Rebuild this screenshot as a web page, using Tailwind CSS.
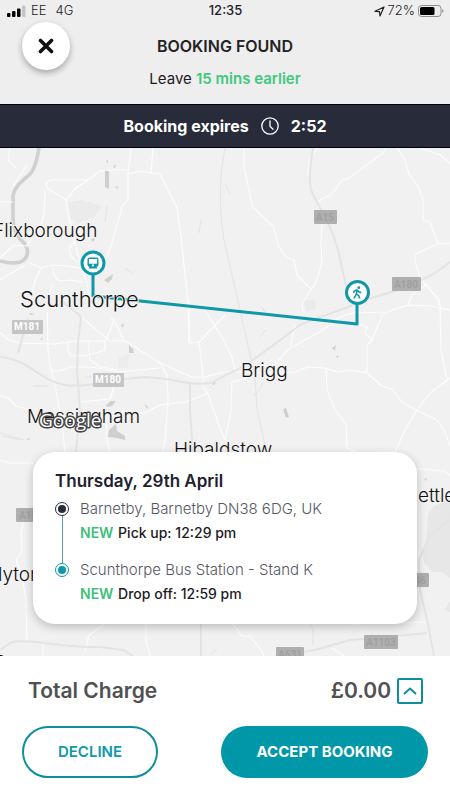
<!DOCTYPE html>
<html lang="en">
<head>
    <meta charset="UTF-8">
    <meta name="viewport" content="width=device-width, initial-scale=1.0">
    <title>Booking Found</title>
    <script src="https://cdn.jsdelivr.net/npm/@tailwindcss/browser@4"></script>
</head>
<body class="flex flex-col min-h-screen bg-white font-['Inter',sans-serif] text-[#1c1c1e]">
    <header class="bg-[#eeeeee] pb-4">
        <!-- phone status bar -->
        <div class="grid grid-cols-3 items-center h-[22px] pl-[7px] pr-[6px] text-[13px] text-[#1c1c1e]">
            <div class="flex items-center gap-[5px] font-light">
                <svg class="w-[19px] h-3" viewBox="0 0 19 12" aria-hidden="true">
                    <rect x="0" y="8" width="3.5" height="4" rx="1" fill="#000"/>
                    <rect x="5" y="6" width="3.5" height="6" rx="1" fill="#000"/>
                    <rect x="10" y="3.5" width="3.5" height="8.5" rx="1" fill="#000"/>
                    <rect x="15" y="0.5" width="3.5" height="11.5" rx="1" fill="#c4c4c4"/>
                </svg>
                <span>EE</span>
                <span class="pl-1">4G</span>
            </div>
            <div class="text-center font-medium">12:35</div>
            <div class="flex items-center justify-end gap-[3px] font-light">
                <svg class="w-[11px] h-[11px]" viewBox="0 0 11 11" aria-hidden="true">
                    <path d="M1 5.3L10 1L6 10L5.5 5.6Z" fill="none" stroke="#222" stroke-width="1.2" stroke-linejoin="round"/>
                </svg>
                <span>72%</span>
                <svg class="w-[26px] h-3" viewBox="0 0 26 12" aria-hidden="true">
                    <rect x="0.5" y="0.5" width="22.5" height="11" rx="3" fill="none" stroke="#8e8e8e"/>
                    <rect x="2" y="2" width="14.5" height="8" rx="1.5" fill="#000"/>
                    <path d="M24.3 4.2a2 2 0 0 1 0 3.6z" fill="#777"/>
                </svg>
            </div>
        </div>
        <div class="grid grid-cols-[48px_1fr_48px] items-center px-[22px]">
            <button type="button" aria-label="Close" class="flex items-center justify-center w-12 h-12 rounded-full bg-white shadow-[0_3px_6px_rgba(0,0,0,0.3)]">
                <svg class="w-4 h-4" viewBox="0 0 16 16" aria-hidden="true">
                    <path d="M2.5 2.5L13.5 13.5M13.5 2.5L2.5 13.5" stroke="#111" stroke-width="3.6" stroke-linecap="round"/>
                </svg>
            </button>
            <h1 class="text-center text-base font-semibold text-[#222]">BOOKING FOUND</h1>
        </div>
        <p class="text-center text-[15px] leading-[18px]">Leave <span class="font-semibold text-[#41c87f]">15 mins earlier</span></p>
    </header>

    <div class="flex items-center justify-center h-11 gap-3 bg-[#272b3a] border-y border-black text-base font-bold text-white">
        <span>Booking expires</span>
        <svg class="w-[18px] h-[18px]" viewBox="0 0 18 18" fill="none" stroke="#fff" stroke-width="1.3" aria-hidden="true">
            <circle cx="9" cy="9" r="8.2"/>
            <path d="M9 3.8V9.3L12 12.2" stroke-linecap="round"/>
        </svg>
        <span>2:52</span>
    </div>

    <main class="relative flex flex-col flex-1 justify-end px-[33px] pb-8 bg-[#f1f1f1] overflow-hidden">
        <svg class="absolute inset-0 w-full h-full" viewBox="0 148 450 508" preserveAspectRatio="xMidYMid slice" role="img" aria-label="Route from Barnetby to Scunthorpe">
            <!-- lakes and built up areas -->
            <g fill="#cfcfcf">
                <path d="M105 169L109 172L109 189L105 187Z"/>
                <path d="M129 345L133 349L134 353L129 353Z"/>
                <path d="M106 405L111 401L116 401L112 406L107 407Z"/>
                <path d="M283 409L286 408L289 417L286 418Z"/>
                <path d="M109 430L116 424L117 431L125 436L125 440L117 438L108 437Z"/>
                <path d="M144 404L148 407L147 409Z"/>
                <path d="M104 280L113 274L112 279L108 283Z"/>
                <path d="M332 348L336 345L335 351Z"/>
                <path d="M336 357L338 355L338 358Z"/>
                <path d="M91 239L95 238L93 242Z"/>
                <path d="M122 359L125 362L122 362Z"/>
                <path d="M106 161L108 160L108 163Z"/>
                <path d="M113 167L116 164L115 168Z"/>
                <path d="M115 186L118 187L117 189Z"/>
                <path d="M30 313L35 314L30 315Z"/>
                <path d="M121 326L124 323L123 327Z"/>
                <path d="M40 340L43 337L42 340Z"/>
                <path d="M212 384L216 382L214 385Z"/>
                <path d="M424 479L427 478L426 481Z"/>
                <path d="M27 440L30 437L29 440Z"/>
            </g>
            <path d="M450 500L434 506L428 515L426 545L422 550L424 563L433 572L442 572L450 578ZM445 610L450 601V612Z" fill="#e7e7e7"/>
            <path d="M68 202L82 200L102 206L94 217L78 223L70 217Z" fill="#ebebeb"/>
            <path d="M118 357L129 354L128 368L118 368Z" fill="#ededed"/>
            <path d="M303 301L315 299L316 309L306 312Z" fill="#ebebeb"/>
            <!-- river -->
            <path d="M39 148C37 160 34 171 29 175C22 181 13 188 13 198V218C13 229 18 238 24 243C30 250 28 259 20 262C14 264 7 263 0 261" fill="none" stroke="#d0d0d0" stroke-width="3.6"/>
            <!-- railways -->
            <g fill="none" stroke="#dfdfdf" stroke-width="0.8">
                <path d="M225 148C220 174 218 205 224 240L238 301L255 377L257 409L266 450"/>
                <path d="M225 184L230 194M201 220L199 233M107 206L105 222M125 268L132 273M98 255L103 250"/>
                <path d="M254 396C258 391 262 389 262 383M260 337L266 330M262 307L266 314"/>
                <path d="M0 433L24 440M2 436L20 440M309 622L313 630V646M211 654L217 649"/>
                <path d="M33 386H49M85 377H92"/>
            </g>
            <!-- minor roads -->
            <g fill="none" stroke="#fcfcfc" stroke-width="1.2" stroke-linejoin="round">
                <path d="M10 148L8 160L16 168M27 165L13 186M0 202H13"/>
                <path d="M131 148L128 174V200L122 206L120 215L116 228L111 246L105 260L98 270"/>
                <path d="M153 148L151 173L160 174L171 196L177 208L181 237L188 302L189 340L190 343"/>
                <path d="M151 173L140 171L128 174M128 170H108L100 171L88 180L76 188L66 200L47 188L46 183L50 180H88"/>
                <path d="M66 200L69 217L74 240L80 262L87 283L90 300"/>
                <path d="M45 190L44 215L40 227L26 246M0 258L14 245L28 246M28 262L41 268L52 265L68 266L80 268"/>
                <path d="M0 280L25 265M41 268L36 278L31 295M52 265L54 275L59 281L72 280L83 282M74 243L69 248L71 256L77 262M48 300L52 285"/>
                <path d="M0 333L9 340L20 343L55 344L75 341L106 341L113 323"/>
                <path d="M47 300L48 350L50 365L56 390L63 430L65 455M51 371H60L70 367L90 367L120 372L159 368"/>
                <path d="M81 317L110 341L125 341L160 363L192 377H205L225 372M111 317L118 328L124 341"/>
                <path d="M68 341V350L71 356L88 355L105 350V341M88 341L90 360L100 367L118 370"/>
                <path d="M160 363L167 375L168 400L165 440L163 452M80 402L110 399L114 387M107 411L106 435L110 452"/>
                <path d="M106 413H145L160 405L185 402L207 394M0 395L8 398L16 406L30 410"/>
                <path d="M189 300V342L192 343L199 342L225 315M204 309L225 342M199 342L203 375V387L208 394L220 428L225 440"/>
                <path d="M244 148L244 168L248 185L252 206L264 218L273 226L279 247L286 257L294 260L297 275L311 289"/>
                <path d="M318 148L309 160L308 175M386 148L383 153L346 180L343 179L331 195L316 202"/>
                <path d="M322 223L321 242L322 263L315 285L311 289L302 304L303 312"/>
                <path d="M397 148L405 160L409 174L418 186L423 200L423 220L430 222L438 244L415 254L415 262L421 279L432 292L439 300V306M438 244L450 243"/>
                <path d="M420 148L440 155L450 163M427 284L412 295L408 305L405 306"/>
                <path d="M274 365L290 348L320 332L340 317L352 313L387 312L408 305L430 306L450 310M290 348L295 325"/>
                <path d="M359 324L367 327L365 333L372 340L383 313M372 340L367 345V370L364 373"/>
                <path d="M225 372L240 372L275 373L295 372L308 367L325 368L337 372L350 370L367 373L382 386L392 389L403 403L416 410L437 420L445 432L450 446"/>
                <path d="M326 370L327 390L335 410L346 424L347 448L356 452"/>
                <path d="M395 452L405 430L417 410L430 393L450 378M440 303L441 350L447 380M225 343L231 355L236 372M248 378L232 382L231 410L225 440"/>
                <path d="M0 460L10 463H34M23 523L21 535L22 552L16 560L22 576L26 600L27 641"/>
                <path d="M43 641V656M105 624L89 635L85 652M146 624V640L150 656M233 624L242 636H250L261 650L264 656M332 648L344 656M350 624L427 622"/>
                <path d="M378 452H393L405 468L445 471L450 475"/>
            </g>
            <!-- main roads -->
            <g fill="none" stroke="#e4e4e4" stroke-width="2">
                <path d="M0 357C28 359 41 381 65 385C90 388 110 379 145 377C175 378 185 386 210 383C218 381 225 374 235 371C255 360 275 344 300 325C315 318 340 311 355 304"/>
                <path d="M368 299L395 291C415 284 435 275 450 262"/>
                <path d="M313 148C310 165 309 180 311 190C318 207 330 220 338 250L347 290L355 304"/>
                <path d="M61 300C70 310 79 312 81 318L78 342L77 370L80 410L76 452"/>
                <path d="M28 318L18 353M190 384L190 410L193 452"/>
                <path d="M450 520L430 535L419 560V585L427 620L434 656M0 650L12 642C30 638 60 648 100 647L123 650L133 656"/>
                <path d="M275 656L315 650L350 640L375 638L427 633M201 624V656"/>
            </g>
            <!-- road shields -->
            <g font-family="Roboto, sans-serif" font-size="10" font-weight="700" text-anchor="middle">
                <g fill="#afafaf">
                    <rect x="314" y="210" width="23" height="14" rx="1"/>
                    <rect x="392" y="277" width="29" height="14" rx="1"/>
                    <rect x="16" y="508" width="23" height="14" rx="1"/>
                    <rect x="406" y="573" width="23" height="14" rx="1"/>
                    <rect x="364" y="635" width="34" height="14" rx="1"/>
                    <rect x="276" y="647" width="28" height="14" rx="1"/>
                </g>
                <g fill="#9f9f9f" font-weight="500">
                    <text x="325" y="221">A15</text>
                    <text x="406" y="288">A180</text>
                    <text x="28" y="519">A15</text>
                    <text x="417" y="584">A46</text>
                    <text x="381" y="646">A1103</text>
                    <text x="290" y="658">A631</text>
                </g>
                <rect x="12" y="320" width="31" height="14" rx="1" fill="#c5c5c5"/>
                <rect x="93" y="373" width="31" height="14" rx="1" fill="#c5c5c5"/>
                <text x="27" y="330" fill="#fff">M181</text>
                <text x="108" y="383" fill="#fff">M180</text>
            </g>
            <!-- route -->
            <path d="M93 274V296L357 324V304" fill="none" stroke="#0e98a8" stroke-width="3" stroke-linejoin="round"/>
            <!-- place names -->
            <g font-family="Inter, sans-serif" font-size="19" font-weight="300" fill="#111" stroke="#f4f4f4" stroke-width="2" paint-order="stroke" stroke-linejoin="round">
                <text x="-7" y="237">Flixborough</text>
                <text x="20" y="307" font-size="22">Scunthorpe</text>
                <text x="241" y="377">Brigg</text>
                <text x="27" y="423">Messingham</text>
                <text x="174" y="456">Hibaldstow</text>
                <text x="418" y="502">ettleton</text>
                <text x="-2" y="581">lyton</text>
                <text x="-6" y="669">S</text>
            </g>
            <text x="39" y="427" font-family="Open Sans, sans-serif" font-size="19" font-weight="500" fill="#fff" stroke="#444" stroke-width="3" paint-order="stroke" stroke-linejoin="round">Google</text>
            <!-- bus marker -->
            <circle cx="93" cy="263" r="11" fill="#fff" stroke="#0e98a8" stroke-width="3"/>
            <g fill="#0e98a8">
                <path fill-rule="evenodd" d="M89.5 257.5H96.500Q98.5 257.5 98.5 259.5V265Q98.5 266.800 96.5 266.800L97.5 268.5H88.5L89.5 266.800Q87.5 266.800 87.5 265V259.5Q87.5 257.5 89.5 257.5ZM88.900 259V263.700H97.100V259Z"/>
                <circle cx="93" cy="265.4" r="1.1" fill="#fff"/>
            </g>
            <!-- walking marker -->
            <circle cx="357.5" cy="292.5" r="11" fill="#fff" stroke="#0e98a8" stroke-width="3"/>
            <circle cx="358.8" cy="287.7" r="1.4" fill="#0e98a8"/>
            <path d="M353.9 293V291.3L357 289.8L358.8 291.8L361.3 292.7M357.2 290.2L356.3 294.2L354 298.3M356.6 294L358.8 295.7L359.7 298.5" fill="none" stroke="#0e98a8" stroke-width="1.5"/>
        </svg>

        <section class="relative rounded-[22px] bg-white px-[22px] pt-[17px] pb-[18px] shadow-[0_3px_10px_rgba(0,0,0,0.22)]">
            <h2 class="mb-1 text-[17px] leading-6 font-semibold text-[#20222e]">Thursday, 29th April</h2>
            <ol class="text-sm leading-6 font-medium">
                <li class="flex gap-[11px]">
                    <div class="flex flex-col items-center w-[14px] pt-[5px]">
                        <span class="flex items-center justify-center w-[14px] h-[14px] shrink-0 rounded-full border border-[#272b3a]"><span class="w-2 h-2 rounded-full bg-[#272b3a]"></span></span>
                        <span class="flex-1 w-px -mb-[5px] bg-[#5a9fac]"></span>
                    </div>
                    <div class="pb-[13px]">
                        <p class="text-[15px] leading-6 font-light text-[#555763]">Barnetby, Barnetby DN38 6DG, UK</p>
                        <p><span class="mr-px font-semibold text-[#41c07b]">NEW</span> Pick up: 12:29 pm</p>
                    </div>
                </li>
                <li class="flex gap-[11px]">
                    <div class="w-[14px] pt-[5px]">
                        <span class="flex items-center justify-center w-[14px] h-[14px] rounded-full border border-[#0e98a8]"><span class="w-2 h-2 rounded-full bg-[#0e98a8]"></span></span>
                    </div>
                    <div>
                        <p class="text-[15px] leading-6 font-light text-[#555763]">Scunthorpe Bus Station - Stand K</p>
                        <p><span class="mr-px font-semibold text-[#41c07b]">NEW</span> Drop off: 12:59 pm</p>
                    </div>
                </li>
            </ol>
        </section>
    </main>

    <footer class="px-[22px] py-[22px] bg-white">
        <div class="flex items-center h-[26px] mb-[22px] pl-[6px] pr-[5px] text-[21px] font-semibold text-[#505152]">
            <span>Total Charge</span>
            <span class="ml-auto mr-[6px]">£0.00</span>
            <button type="button" aria-label="Show price details" class="flex items-center justify-center w-[26px] h-[26px] rounded-xs border-2 border-[#0e8d9c]">
                <svg class="w-[14px] h-2" viewBox="0 0 14 8" aria-hidden="true">
                    <path d="M1 7L7 1.6L13 7" fill="none" stroke="#0e8d9c" stroke-width="2"/>
                </svg>
            </button>
        </div>
        <div class="flex justify-between">
            <button type="button" class="w-[136px] h-[52px] rounded-full border-2 border-[#0e8d9c] text-[15px] font-semibold text-[#0e98a8]">DECLINE</button>
            <button type="button" class="w-[207px] h-[52px] rounded-full bg-[#0097a9] text-[15px] font-bold text-white">ACCEPT BOOKING</button>
        </div>
    </footer>
</body>
</html>
